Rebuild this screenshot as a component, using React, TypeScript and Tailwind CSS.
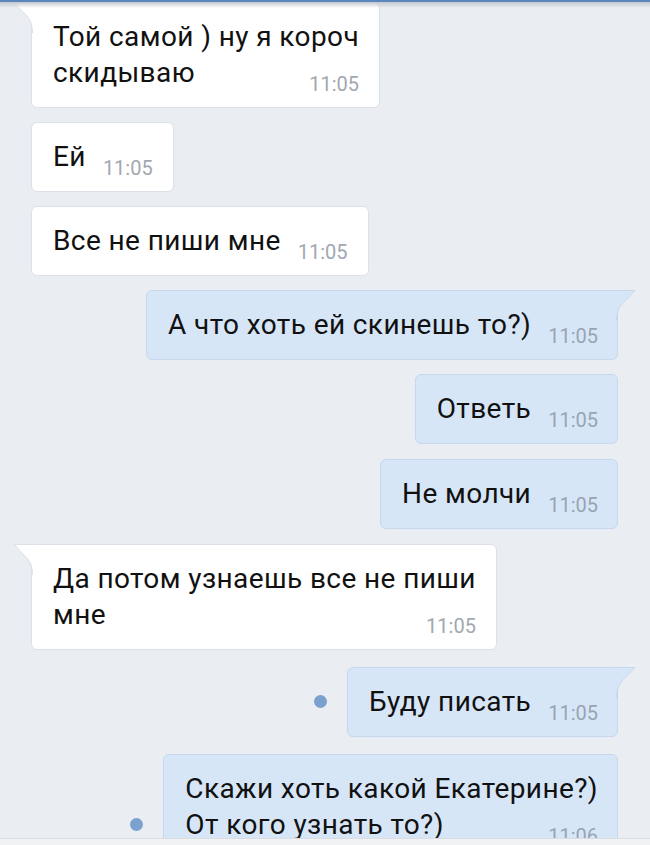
import React from 'react';

type Msg = {
    out: boolean;
    lines: string[];
    time: string;
    tail?: boolean;
    dot?: boolean;
    gap: string;
};

const MESSAGES: Msg[] = [
    { out: false, lines: ['Той самой ) ну я короч', 'скидываю'], time: '11:05', tail: true, gap: 'mt-0' },
    { out: false, lines: ['Ей'], time: '11:05', gap: 'mt-[14px]' },
    { out: false, lines: ['Все не пиши мне'], time: '11:05', gap: 'mt-[14px]' },
    { out: true, lines: ['А что хоть ей скинешь то?)'], time: '11:05', tail: true, gap: 'mt-[14px]' },
    { out: true, lines: ['Ответь'], time: '11:05', gap: 'mt-[14px]' },
    { out: true, lines: ['Не молчи'], time: '11:05', gap: 'mt-[15px]' },
    { out: false, lines: ['Да потом узнаешь все не пиши', 'мне'], time: '11:05', tail: true, gap: 'mt-[15px]' },
    { out: true, lines: ['Буду писать'], time: '11:05', tail: true, dot: true, gap: 'mt-[17px]' },
    { out: true, lines: ['Скажи хоть какой Екатерине?)', 'От кого узнать то?)'], time: '11:06', dot: true, gap: 'mt-[17px]' },
];

const Tail = ({ out }: { out: boolean }) => (
    <svg
        className={`absolute top-[-1px] ${out ? 'right-[-19px] -scale-x-100' : 'left-[-19px]'}`}
        width="21" height="31" viewBox="0 0 21 31"
    >
        <path d="M1,0.5 H20.5 V31 H19.5 V28 Q19.5,20 14,14 Z" fill={out ? '#d7e6f7' : '#ffffff'} />
        <path d="M20.5,0.5 H1 L14,14 Q19.5,20 19.5,31" fill="none" stroke={out ? '#c6d8ee' : '#dce1e7'} strokeWidth="1" />
    </svg>
);

const Bubble = ({ m }: { m: Msg }) => {
    const last = m.lines[m.lines.length - 1];
    const rest = m.lines.slice(0, -1);
    return (
        <div
            className={`relative rounded-[6px] border py-[16px] pl-[21px] ${m.out ? 'bg-[#d7e6f7] border-[#c6d8ee] pr-[19px]' : 'bg-white border-[#dce1e7] pr-[20px]'} ${m.tail ? (m.out ? 'rounded-tr-none' : 'rounded-tl-none') : ''}`}
        >
            {m.tail && <Tail out={m.out} />}
            {rest.map(l => (
                <div key={l} className="text-[28px] leading-[36px] tracking-[0.4px] whitespace-nowrap text-[#111]">{l}</div>
            ))}
            <div className="flex items-baseline justify-between gap-[17px]">
                <span className="text-[28px] leading-[36px] tracking-[0.4px] whitespace-nowrap text-[#111]">{last}</span>
                <span className={`translate-y-[9px] text-[20px] leading-[24px] ${m.out ? 'text-[#97a4b4]' : 'text-[#a1a8b0]'}`}>{m.time}</span>
            </div>
        </div>
    );
};

export default function App() {
    return (
        <div className="relative h-[845px] w-[650px] overflow-hidden bg-[#eaedf1] font-['Roboto','Noto_Sans',sans-serif]">
            <div className="flex flex-col pt-[2px]">
                {MESSAGES.map((m, i) => (
                    <div
                        key={i}
                        className={`flex ${m.gap} ${m.out ? 'justify-end pr-[32px]' : 'justify-start pl-[31px]'}`}
                    >
                        <div className="flex items-end gap-[20px]">
                            {m.dot && <div className="mb-[29px] h-[13px] w-[13px] rounded-full bg-[#7ba1cf]" />}
                            <Bubble m={m} />
                        </div>
                    </div>
                ))}
            </div>

            {/* status bar edge */}
            <div className="absolute inset-x-0 top-0">
                <div className="h-[2px] bg-[#5a86bb]" />
                <div className="h-[6px] bg-gradient-to-b from-[#c3c9d1] to-transparent" />
            </div>

            {/* input panel edge */}
            <div className="absolute inset-x-0 bottom-0 h-[7px] border-t border-[#d9dde2] bg-[#f0f2f4]" />
        </div>
    );
}
